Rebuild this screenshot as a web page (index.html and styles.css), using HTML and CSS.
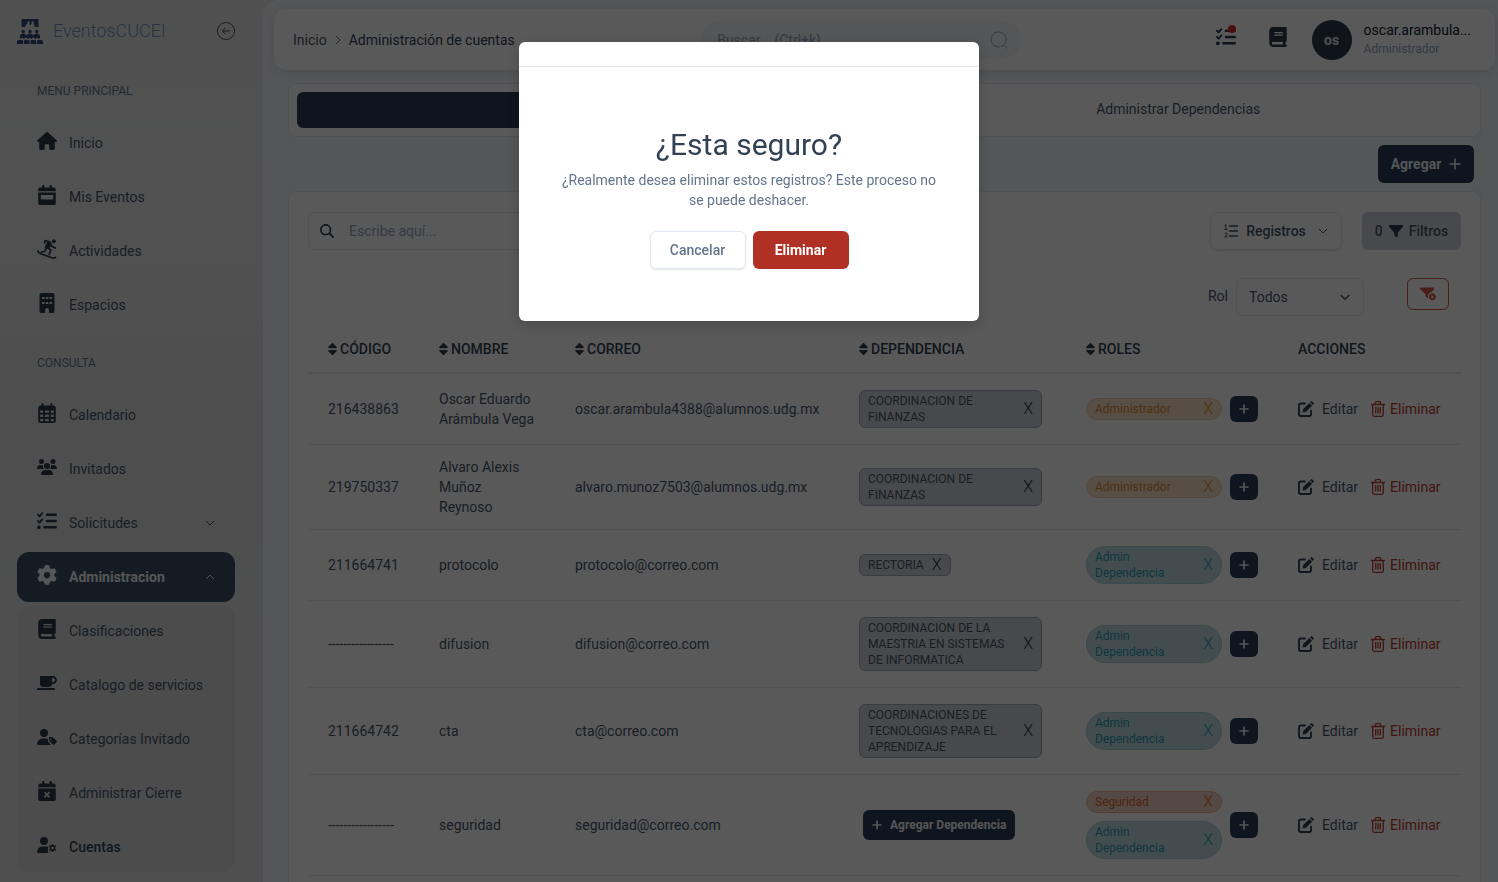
FILE: index.html
```html
<!DOCTYPE html>
<html lang="es">

<head>
  <meta charset="UTF-8">
  <meta name="viewport" content="width=device-width, initial-scale=1.0">
  <title>EventosCUCEI - Administración de cuentas</title>
  <link rel="stylesheet" href="styles.css">
</head>

<body>
  <svg class="sprite" aria-hidden="true">
    <symbol id="i-logo" viewBox="0 0 26 25">
      <path fill-rule="evenodd" d="M5.500 0h15q1 0 1 1v7h-3.700q0-2.500-1.300-3.300a1.300 1.300 0 1 0-1.700 0q-1 .6-1.300 1.800-.3-1.200-1.300-1.800a1.300 1.300 0 1 0-1.700 0Q8.200 5.500 8.200 8H4.500V1q0-1 1-1z" />
      <circle cx="6.200" cy="12.500" r="1.700" />
      <circle cx="13" cy="12.500" r="1.700" />
      <circle cx="19.800" cy="12.500" r="1.700" />
      <path d="M2.800 19q.2-4.400 3.400-4.400 2.300 0 3.400 2 1.100-2 3.400-2t3.400 2q1.100-2 3.400-2 3.200 0 3.400 4.400l-1.600.800-1.600-1-1.800 1.200-1.800-1.700-2 1.700-1.700-1.200-1.700 1.200-2-1.700-1.800 1.700-1.800-1.200-1.600 1z" />
      <path d="M1.500 21h3.800q.9 0 .9 1v3H0v-2.500q0-1.500 1.500-1.500zM8 21h3.500q1 0 1 1v3H7v-3q0-1 1-1zM14.500 21H18q1 0 1 1v3h-5.500v-3q0-1 1-1zM20.700 21h3.800q1.500 0 1.500 1.500V25h-6.200v-3q0-1 .9-1z" />
    </symbol>
    <symbol id="i-house" viewBox="0 0 576 512">
      <path d="M575.8 255.500c0 18-15 32.100-32 32.100h-32l.7 160.200c0 2.700-.2 5.400-.5 8.100V472c0 22.100-17.900 40-40 40H392c-22.100 0-40-17.900-40-40V384c0-17.700-14.300-32-32-32H256c-17.700 0-32 14.300-32 32v88c0 22.100-17.900 40-40 40H104c-22.100 0-40-17.900-40-40V287.600H32c-18 0-32-14-32-32.100c0-9 3-17 10-24L266.400 8c7-7 15-8 22-8s15 2 21 7L564.800 231.500c8 7 12 15 11 24z" />
    </symbol>
    <symbol id="i-event" viewBox="0 0 448 512">
      <path d="M96 32a32 32 0 0 1 64 0v32h128V32a32 32 0 0 1 64 0v32h48a48 48 0 0 1 48 48v48H0v-48a48 48 0 0 1 48-48h48z" />
      <path fill-rule="evenodd" d="M0 192h448v272a48 48 0 0 1-48 48H48a48 48 0 0 1-48-48zm80 64a16 16 0 0 0-16 16v80a16 16 0 0 0 16 16h288a16 16 0 0 0 16-16v-80a16 16 0 0 0-16-16z" />
    </symbol>
    <symbol id="i-snow" viewBox="0 0 20 20">
      <circle cx="16.800" cy="2.200" r="2" />
      <path d="M8 1.500l4.500 1.300L14.200 7l4.300 2M8 1.500 7.500 4M10 8.500l3.800 2.500-1.600 4.500M9 9.500 8.300 12l-4 1.300M.8 12q.7 1.700 2.400 2.500l11.500 4.200q2.200.8 3.800-.2" fill="none" stroke="currentColor" stroke-width="1.700" stroke-linecap="round" stroke-linejoin="round" />
      <path d="m10.500 2 3.500 1.500 1.200 2L11.500 10l-3.500-.5q-.5-1.700.5-3z" />
    </symbol>
    <symbol id="i-building" viewBox="0 0 384 512">
      <path fill-rule="evenodd" d="M48 0h288a48 48 0 0 1 48 48v416a48 48 0 0 1-48 48h-96v-80a48 48 0 0 0-96 0v80H48a48 48 0 0 1-48-48V48A48 48 0 0 1 48 0zm16 104v48h64v-48zm96 0v48h64v-48zm96 0v48h64v-48zM64 232v48h64v-48zm96 0v48h64v-48zm96 0v48h64v-48z" />
    </symbol>
    <symbol id="i-calendar" viewBox="0 0 448 512">
      <path fill-rule="evenodd" d="M88 24a24 24 0 0 1 48 0v40h176V24a24 24 0 0 1 48 0v40h24a64 64 0 0 1 64 64v320a64 64 0 0 1-64 64H64a64 64 0 0 1-64-64V128a64 64 0 0 1 64-64h24zM48 192v56h80v-56zm128 0v56h96v-56zm144 0v56h80v-56zM48 296v64h80v-64zm128 0v64h96v-64zm144 0v64h80v-64zM48 408v40q0 16 16 16h64v-56zm128 0v56h96v-56zm144 0v56h64q16 0 16-16v-40z" />
    </symbol>
    <symbol id="i-users" viewBox="0 0 640 512">
      <path d="M144 0a80 80 0 1 1 0 160 80 80 0 1 1 0-160zM512 0a80 80 0 1 1 0 160 80 80 0 1 1 0-160zM0 298.700C0 239.800 47.800 192 106.700 192h42.700c15.900 0 31 3.500 44.600 9.700-1.300 7.200-1.900 14.700-1.900 22.300 0 38.200 16.800 72.500 43.300 96H21.300C9.600 320 0 310.400 0 298.700zM405.300 320c26.600-23.500 43.300-57.800 43.300-96 0-7.600-.7-15-1.900-22.300 13.600-6.300 28.700-9.700 44.600-9.700h42.700C592.200 192 640 239.800 640 298.700c0 11.800-9.600 21.300-21.300 21.300H405.300zM224 224a96 96 0 1 1 192 0 96 96 0 1 1-192 0zM128 485.300C128 411.700 187.700 352 261.300 352h117.400C452.300 352 512 411.700 512 485.300c0 14.700-11.900 26.700-26.700 26.700H154.700c-14.700 0-26.700-11.900-26.700-26.700z" />
    </symbol>
    <symbol id="i-check" viewBox="0 0 512 512">
      <path d="M152.100 38.200c9.900 8.900 10.700 24 1.800 33.900l-72 80c-4.400 4.900-10.600 7.800-17.200 7.900s-12.900-2.400-17.600-7L7 113C-2.300 103.600-2.300 88.400 7 79s24.600-9.400 33.900 0l22.100 22.100 55.100-61.200c8.900-9.900 24-10.700 33.900-1.800zm0 160c9.900 8.900 10.700 24 1.800 33.900l-72 80c-4.400 4.900-10.600 7.800-17.200 7.900s-12.900-2.400-17.600-7L7 273c-9.400-9.400-9.400-24.600 0-33.900s24.600-9.400 33.900 0l22.100 22.100 55.100-61.200c8.900-9.900 24-10.700 33.900-1.800zM224 96c0-17.700 14.300-32 32-32H480c17.700 0 32 14.300 32 32s-14.300 32-32 32H256c-17.700 0-32-14.300-32-32zm0 160c0-17.700 14.300-32 32-32H480c17.700 0 32 14.300 32 32s-14.300 32-32 32H256c-17.700 0-32-14.300-32-32zM160 416c0-17.700 14.300-32 32-32H480c17.700 0 32 14.300 32 32s-14.300 32-32 32H192c-17.700 0-32-14.300-32-32zM48 368a48 48 0 1 1 0 96 48 48 0 1 1 0-96z" />
    </symbol>
    <symbol id="i-gear" viewBox="0 0 512 512">
      <path d="M495.900 166.600c3.200 8.700 .5 18.400-6.400 24.600l-43.300 39.400c1.100 8.300 1.700 16.800 1.700 25.400s-.6 17.100-1.700 25.400l43.300 39.400c6.900 6.200 9.600 15.900 6.400 24.600c-4.400 11.900-9.700 23.300-15.800 34.300l-4.700 8.100c-6.600 11-14 21.400-22.100 31.200c-5.900 7.200-15.700 9.600-24.500 6.800l-55.700-17.700c-13.400 10.300-28.200 18.900-44 25.400l-12.500 57.100c-2 9.100-9 16.300-18.200 17.800c-13.800 2.300-28 3.500-42.500 3.500s-28.700-1.200-42.500-3.500c-9.200-1.500-16.200-8.700-18.200-17.800l-12.500-57.100c-15.800-6.500-30.600-15.100-44-25.400L83.100 425.900c-8.800 2.800-18.600 .3-24.500-6.800c-8.100-9.800-15.500-20.200-22.100-31.200l-4.700-8.100c-6.100-11-11.400-22.400-15.800-34.300c-3.200-8.700-.5-18.400 6.400-24.600l43.300-39.400C64.600 273.100 64 264.600 64 256s.6-17.100 1.700-25.400L22.400 191.200c-6.900-6.200-9.600-15.900-6.400-24.600c4.400-11.900 9.700-23.300 15.800-34.300l4.700-8.100c6.600-11 14-21.400 22.100-31.200c5.900-7.200 15.700-9.600 24.500-6.800l55.700 17.700c13.400-10.300 28.200-18.900 44-25.400l12.500-57.100c2-9.100 9-16.300 18.200-17.800C227.300 1.200 241.500 0 256 0s28.700 1.200 42.500 3.500c9.200 1.500 16.200 8.700 18.200 17.800l12.500 57.100c15.800 6.500 30.600 15.100 44 25.400l55.700-17.700c8.800-2.800 18.600-.3 24.500 6.800c8.100 9.800 15.500 20.200 22.100 31.200l4.700 8.100c6.100 11 11.400 22.400 15.800 34.300zM256 336a80 80 0 1 0 0-160 80 80 0 1 0 0 160z" />
    </symbol>
    <symbol id="i-book" viewBox="0 0 448 512">
      <path d="M96 0C43 0 0 43 0 96V416c0 53 43 96 96 96H416c17.700 0 32-14.300 32-32s-14.300-32-32-32V384c17.700 0 32-14.300 32-32V32c0-17.700-14.300-32-32-32H96zm0 384H352v64H96c-17.700 0-32-14.300-32-32s14.300-32 32-32zm32-240c0-8.800 7.200-16 16-16H336c8.800 0 16 7.200 16 16s-7.200 16-16 16H144c-8.800 0-16-7.200-16-16zm16 48H336c8.800 0 16 7.200 16 16s-7.200 16-16 16H144c-8.800 0-16-7.200-16-16s7.200-16 16-16z" />
    </symbol>
    <symbol id="i-mug" viewBox="0 0 640 512">
      <path d="M96 64c0-17.700 14.300-32 32-32H512c70.700 0 128 57.300 128 128s-57.300 128-128 128H480c0 53-43 96-96 96H192c-53 0-96-43-96-96V64zM480 224h32c35.300 0 64-28.700 64-64s-28.700-64-64-64H480V224zM32 416H544c17.700 0 32 14.300 32 32s-14.300 32-32 32H32c-17.700 0-32-14.300-32-32s14.300-32 32-32z" />
    </symbol>
    <symbol id="i-usertag" viewBox="0 0 640 512">
      <path d="M224 256a128 128 0 1 0 0-256 128 128 0 1 0 0 256zm-45.700 48C79.800 304 0 383.800 0 482.300 0 498.700 13.300 512 29.700 512h388.600c10 0 18.900-4.900 24.300-12.500l-63.400-63.400c-18-18-28.100-42.400-28.100-67.900V320c-23-10.300-48-16-81.400-16z" />
      <path fill-rule="evenodd" d="M384 256h100q20 0 33 13l109 109q20 22 0 45l-72 74q-24 20-46 0L399 388q-15-14-15-34zm52 44a24 24 0 1 0 1 0z" />
    </symbol>
    <symbol id="i-calx" viewBox="0 0 448 512">
      <path d="M96 32a32 32 0 0 1 64 0v32h128V32a32 32 0 0 1 64 0v32h48a48 48 0 0 1 48 48v48H0v-48a48 48 0 0 1 48-48h48z" />
      <path fill-rule="evenodd" d="M0 192h448v272a48 48 0 0 1-48 48H48a48 48 0 0 1-48-48zm175 79-32 32 49 49-49 49 32 32 49-49 49 49 32-32-49-49 49-49-32-32-49 49z" />
    </symbol>
    <symbol id="i-usergear" viewBox="0 0 640 512">
      <path d="M224 256a128 128 0 1 0 0-256 128 128 0 1 0 0 256zm-45.700 48C79.800 304 0 383.800 0 482.300 0 498.700 13.300 512 29.700 512h350q-22-20-34-52-10-34 12-57-18-30 10-94l-98-5z" />
      <path fill-rule="evenodd" d="m474 222 45 0 7 38 25 14 36-13 23 40-29 26v50l29 26-23 40-36-13-25 14-7 38h-45l-7-38-25-14-36 13-23-40 29-26v-50l-29-26 23-40 36 13 25-14zm23 88a42 42 0 1 0 1 0z" />
    </symbol>
    <symbol id="i-filter" viewBox="0 0 512 512">
      <path d="M3.900 54.900C10.500 40.900 24.500 32 40 32H472c15.500 0 29.500 8.900 36.100 22.900s4.600 30.500-5.200 42.500L320 320.900V448c0 12.100-6.800 23.200-17.700 28.600s-23.800 4.300-33.500-3l-64-48c-8.100-6-12.800-15.500-12.800-25.600V320.900L9 97.300C-.7 85.400-2.800 68.800 3.900 54.900z" />
    </symbol>
    <symbol id="i-filterx" viewBox="0 0 640 512">
      <path d="M4 23Q12 0 40 0H532q28 0 36 23t-9 42L462 184q-130 10-142 160v80l-84-56q-16-10-16-32V270L13 65Q-4 46 4 23z" />
      <path fill-rule="evenodd" d="M496 224a144 144 0 1 0 1 0zm-59 108 23-23 36 36 36-36 23 23-36 36 36 36-23 23-36-36-36 36-23-23 36-36z" />
    </symbol>
    <symbol id="i-search" viewBox="0 0 512 512">
      <path d="M416 208c0 45.900-14.900 88.300-40 122.700L502.600 457.400c12.500 12.500 12.500 32.800 0 45.300s-32.800 12.500-45.300 0L330.700 376c-34.400 25.200-76.800 40-122.700 40C93.100 416 0 322.900 0 208S93.100 0 208 0S416 93.100 416 208zM208 352a144 144 0 1 0 0-288 144 144 0 1 0 0 288z" />
    </symbol>
    <symbol id="i-sort" viewBox="0 0 320 512">
      <path d="M137.400 41.400c12.500-12.500 32.800-12.500 45.300 0l128 128c9.200 9.200 11.900 22.900 6.900 34.900s-16.600 19.800-29.600 19.800H32c-12.900 0-24.600-7.800-29.600-19.800s-2.200-25.700 6.900-34.900l128-128zm0 429.300l-128-128c-9.200-9.200-11.900-22.900-6.900-34.900s16.600-19.800 29.600-19.800H288c12.900 0 24.600 7.800 29.600 19.800s2.200 25.700-6.900 34.900l-128 128c-12.500 12.500-32.800 12.500-45.300 0z" />
    </symbol>
    <symbol id="i-lens" viewBox="0 0 18 18">
      <path d="M8.500 1a7.500 7.500 0 1 0 .1 0zM14 14l3.500 3.500" fill="none" stroke="currentColor" />
    </symbol>
    <symbol id="i-back" viewBox="0 0 18 18">
      <path d="M9 .5a8.500 8.500 0 1 0 .1 0zM13 9H5.500M8.500 5.800 5.300 9l3.200 3.200" fill="none" stroke="currentColor" />
    </symbol>
    <symbol id="i-down" viewBox="0 0 10 10">
      <path d="M1 3l4 4 4-4" fill="none" stroke="currentColor" />
    </symbol>
    <symbol id="i-caret" viewBox="0 0 10 10">
      <path d="M.7 3 5 7.300 9.300 3" fill="none" stroke="currentColor" stroke-width="1.500" />
    </symbol>
    <symbol id="i-up" viewBox="0 0 10 10">
      <path d="M1 7l4-4 4 4" fill="none" stroke="currentColor" />
    </symbol>
    <symbol id="i-next" viewBox="0 0 10 10">
      <path d="M3 1l4 4-4 4" fill="none" stroke="currentColor" />
    </symbol>
    <symbol id="i-plus" viewBox="0 0 12 12">
      <path d="M6 .5v11M.5 6h11" fill="none" stroke="currentColor" stroke-width="1.500" />
    </symbol>
    <symbol id="i-plus-bold" viewBox="0 0 10 10">
      <path d="M5 .5v9M.5 5h9" fill="none" stroke="currentColor" stroke-width="1.700" />
    </symbol>
    <symbol id="i-list" viewBox="0 0 14 14">
      <path d="M5 2h9M5 7h9M5 12h9" fill="none" stroke="currentColor" stroke-width="1.500" />
      <path d="M.5 1.500 2 .8v4.700M.5 5.500h3M.6 9.300q1.200-1 2.200-.2.800 1-.4 2L.7 13h3" fill="none" stroke="currentColor" />
    </symbol>
    <symbol id="i-edit" viewBox="0 0 16 16">
      <path d="M7 2.500H2.800Q1 2.500 1 4.300v9Q1 15 2.800 15h8.400q1.800 0 1.800-1.700V9.500" fill="none" stroke="currentColor" stroke-width="1.900" stroke-linecap="round" />
      <path d="M11.300 1.900 14.100 4.700 7.900 10.900 4.500 11.600 5.200 8.100zM12 1.200l.9-.8q.7-.6 1.400 0l1.300 1.300q.5.700 0 1.300l-.9.900z" />
    </symbol>
    <symbol id="i-trash" viewBox="0 0 14 16">
      <path d="M0 3.500h14M4.500 3V1.500Q4.500.7 5.300.7h3.400q.8 0 .8.800V3M1.700 4v9.800q0 1.500 1.500 1.500h7.600q1.500 0 1.500-1.500V4M4.700 6v6.500M7 6v6.500M9.300 6v6.500" fill="none" stroke="currentColor" stroke-width="1.300" />
    </symbol>
  </svg>

  <div class="layout">
    <aside class="sidebar">
      <div class="brand">
        <svg class="brand-logo"><use href="#i-logo" /></svg>
        <a href="#" class="brand-name">EventosCUCEI</a>
        <button class="icon-btn" aria-label="Contraer menú"><svg class="icon-18"><use href="#i-back" /></svg></button>
      </div>

      <nav>
        <h2 class="menu-title">MENU PRINCIPAL</h2>
        <ul class="menu">
          <li><a href="#" class="menu-link"><svg class="menu-icon"><use href="#i-house" /></svg>Inicio</a></li>
          <li><a href="#" class="menu-link"><svg class="menu-icon"><use href="#i-event" /></svg>Mis Eventos</a></li>
          <li><a href="#" class="menu-link"><svg class="menu-icon"><use href="#i-snow" /></svg>Actividades</a></li>
          <li><a href="#" class="menu-link"><svg class="menu-icon"><use href="#i-building" /></svg>Espacios</a></li>
        </ul>
        <h2 class="menu-title">CONSULTA</h2>
        <ul class="menu">
          <li><a href="#" class="menu-link"><svg class="menu-icon"><use href="#i-calendar" /></svg>Calendario</a></li>
          <li><a href="#" class="menu-link"><svg class="menu-icon"><use href="#i-users" /></svg>Invitados</a></li>
          <li><a href="#" class="menu-link"><svg class="menu-icon"><use href="#i-check" /></svg>Solicitudes<svg class="menu-arrow"><use href="#i-down" /></svg></a></li>
          <li><a href="#" class="menu-link active"><svg class="menu-icon"><use href="#i-gear" /></svg>Administracion<svg class="menu-arrow"><use href="#i-up" /></svg></a>
            <ul class="menu submenu">
              <li><a href="#" class="menu-link"><svg class="menu-icon"><use href="#i-book" /></svg>Clasificaciones</a></li>
              <li><a href="#" class="menu-link"><svg class="menu-icon"><use href="#i-mug" /></svg>Catalogo de servicios</a></li>
              <li><a href="#" class="menu-link"><svg class="menu-icon"><use href="#i-usertag" /></svg>Categorías Invitado</a></li>
              <li><a href="#" class="menu-link"><svg class="menu-icon"><use href="#i-calx" /></svg>Administrar Cierre</a></li>
              <li><a href="#" class="menu-link current"><svg class="menu-icon"><use href="#i-usergear" /></svg>Cuentas</a></li>
            </ul>
          </li>
        </ul>
      </nav>
    </aside>

    <div class="main">
      <header class="topbar">
        <nav class="breadcrumb" aria-label="Ruta">
          <a href="#">Inicio</a>
          <svg class="icon-10"><use href="#i-next" /></svg>
          <span>Administración de cuentas</span>
        </nav>
        <div class="quick-search">
          <input type="text" placeholder="Buscar &nbsp;&nbsp; (Ctrl+k)" aria-label="Buscar">
          <svg class="icon-18"><use href="#i-lens" /></svg>
        </div>
        <div class="user-area">
          <button class="icon-btn notify" aria-label="Solicitudes pendientes"><svg class="icon-20"><use href="#i-check" /></svg></button>
          <button class="icon-btn" aria-label="Manual"><svg class="icon-20"><use href="#i-book" /></svg></button>
          <div class="user">
            <span class="avatar">os</span>
            <div>
              <div class="user-name">oscar.arambula...</div>
              <div class="user-role">Administrador</div>
            </div>
          </div>
        </div>
      </header>

      <main class="content">
        <div class="tabs">
          <button class="tab active" aria-label="Administrar Cuentas"></button>
          <button class="tab">Administrar Dependencias</button>
        </div>

        <div class="add-row">
          <button class="btn btn-primary btn-add">Agregar <svg class="icon-12"><use href="#i-plus" /></svg></button>
        </div>

        <section class="card">
          <div class="toolbar">
            <div class="search-box">
              <svg class="icon-14"><use href="#i-search" /></svg>
              <input type="text" placeholder="Escribe aquí..." aria-label="Buscar cuentas">
            </div>
            <button class="btn btn-registros"><svg class="icon-14"><use href="#i-list" /></svg>Registros<svg class="icon-10"><use href="#i-down" /></svg></button>
            <button class="btn btn-filtros">0<svg class="icon-14"><use href="#i-filter" /></svg>Filtros</button>
          </div>
          <div class="filters">
            <label for="rol">Rol</label>
            <div class="select-wrap">
              <select id="rol">
                <option>Todos</option>
              </select>
              <svg class="icon-10"><use href="#i-caret" /></svg>
            </div>
            <button class="btn-clear" aria-label="Quitar filtros"><svg class="icon-16"><use href="#i-filterx" /></svg></button>
          </div>

          <table class="accounts">
            <colgroup>
              <col class="col-code">
              <col class="col-name">
              <col>
              <col class="col-dep">
              <col class="col-roles">
              <col class="col-actions">
            </colgroup>
            <thead>
              <tr>
                <th><svg class="sort"><use href="#i-sort" /></svg>CÓDIGO</th>
                <th><svg class="sort"><use href="#i-sort" /></svg>NOMBRE</th>
                <th><svg class="sort"><use href="#i-sort" /></svg>CORREO</th>
                <th><svg class="sort"><use href="#i-sort" /></svg>DEPENDENCIA</th>
                <th><svg class="sort"><use href="#i-sort" /></svg>ROLES</th>
                <th>ACCIONES</th>
              </tr>
            </thead>
            <tbody>
              <tr>
                <td>216438863</td>
                <td>Oscar Eduardo Arámbula Vega</td>
                <td>oscar.arambula4388@alumnos.udg.mx</td>
                <td><div class="chip dep">COORDINACION DE FINANZAS <button>X</button></div></td>
                <td>
                  <div class="roles">
                    <div class="role-list">
                      <div class="chip role admin">Administrador <button>X</button></div>
                    </div>
                    <button class="btn-plus" aria-label="Agregar rol"><svg class="icon-10"><use href="#i-plus-bold" /></svg></button>
                  </div>
                </td>
                <td>
                  <div class="actions">
                    <a href="#"><svg class="icon-16"><use href="#i-edit" /></svg>Editar</a>
                    <a href="#" class="danger"><svg class="icon-16"><use href="#i-trash" /></svg>Eliminar</a>
                  </div>
                </td>
              </tr>
              <tr>
                <td>219750337</td>
                <td>Alvaro Alexis Muñoz Reynoso</td>
                <td>alvaro.munoz7503@alumnos.udg.mx</td>
                <td><div class="chip dep">COORDINACION DE FINANZAS <button>X</button></div></td>
                <td>
                  <div class="roles">
                    <div class="role-list">
                      <div class="chip role admin">Administrador <button>X</button></div>
                    </div>
                    <button class="btn-plus" aria-label="Agregar rol"><svg class="icon-10"><use href="#i-plus-bold" /></svg></button>
                  </div>
                </td>
                <td>
                  <div class="actions">
                    <a href="#"><svg class="icon-16"><use href="#i-edit" /></svg>Editar</a>
                    <a href="#" class="danger"><svg class="icon-16"><use href="#i-trash" /></svg>Eliminar</a>
                  </div>
                </td>
              </tr>
              <tr>
                <td>211664741</td>
                <td>protocolo</td>
                <td>protocolo@correo.com</td>
                <td><div class="chip dep">RECTORIA <button>X</button></div></td>
                <td>
                  <div class="roles">
                    <div class="role-list">
                      <div class="chip role dependency">Admin Dependencia <button>X</button></div>
                    </div>
                    <button class="btn-plus" aria-label="Agregar rol"><svg class="icon-10"><use href="#i-plus-bold" /></svg></button>
                  </div>
                </td>
                <td>
                  <div class="actions">
                    <a href="#"><svg class="icon-16"><use href="#i-edit" /></svg>Editar</a>
                    <a href="#" class="danger"><svg class="icon-16"><use href="#i-trash" /></svg>Eliminar</a>
                  </div>
                </td>
              </tr>
              <tr>
                <td>-----------------</td>
                <td>difusion</td>
                <td>difusion@correo.com</td>
                <td><div class="chip dep">COORDINACION DE LA MAESTRIA EN SISTEMAS DE INFORMATICA <button>X</button></div></td>
                <td>
                  <div class="roles">
                    <div class="role-list">
                      <div class="chip role dependency">Admin Dependencia <button>X</button></div>
                    </div>
                    <button class="btn-plus" aria-label="Agregar rol"><svg class="icon-10"><use href="#i-plus-bold" /></svg></button>
                  </div>
                </td>
                <td>
                  <div class="actions">
                    <a href="#"><svg class="icon-16"><use href="#i-edit" /></svg>Editar</a>
                    <a href="#" class="danger"><svg class="icon-16"><use href="#i-trash" /></svg>Eliminar</a>
                  </div>
                </td>
              </tr>
              <tr>
                <td>211664742</td>
                <td>cta</td>
                <td>cta@correo.com</td>
                <td><div class="chip dep">COORDINACIONES DE TECNOLOGIAS PARA EL APRENDIZAJE <button>X</button></div></td>
                <td>
                  <div class="roles">
                    <div class="role-list">
                      <div class="chip role dependency">Admin Dependencia <button>X</button></div>
                    </div>
                    <button class="btn-plus" aria-label="Agregar rol"><svg class="icon-10"><use href="#i-plus-bold" /></svg></button>
                  </div>
                </td>
                <td>
                  <div class="actions">
                    <a href="#"><svg class="icon-16"><use href="#i-edit" /></svg>Editar</a>
                    <a href="#" class="danger"><svg class="icon-16"><use href="#i-trash" /></svg>Eliminar</a>
                  </div>
                </td>
              </tr>
              <tr>
                <td>-----------------</td>
                <td>seguridad</td>
                <td>seguridad@correo.com</td>
                <td><button class="btn btn-primary btn-dep"><svg class="icon-10"><use href="#i-plus-bold" /></svg>Agregar Dependencia</button></td>
                <td>
                  <div class="roles">
                    <div class="role-list">
                      <div class="chip role security">Seguridad <button>X</button></div>
                      <div class="chip role dependency">Admin Dependencia <button>X</button></div>
                    </div>
                    <button class="btn-plus" aria-label="Agregar rol"><svg class="icon-10"><use href="#i-plus-bold" /></svg></button>
                  </div>
                </td>
                <td>
                  <div class="actions">
                    <a href="#"><svg class="icon-16"><use href="#i-edit" /></svg>Editar</a>
                    <a href="#" class="danger"><svg class="icon-16"><use href="#i-trash" /></svg>Eliminar</a>
                  </div>
                </td>
              </tr>
            </tbody>
          </table>
        </section>
      </main>
    </div>
  </div>

  <div class="overlay">
    <div class="modal" role="dialog" aria-modal="true" aria-labelledby="modal-title">
      <div class="modal-header"></div>
      <div class="modal-body">
        <h1 id="modal-title">¿Esta seguro?</h1>
        <p>¿Realmente desea eliminar estos registros? Este proceso no se puede deshacer.</p>
        <div class="modal-buttons">
          <button class="btn btn-cancel">Cancelar</button>
          <button class="btn btn-danger">Eliminar</button>
        </div>
      </div>
    </div>
  </div>
</body>

</html>
```
FILE: styles.css
```css
* {
  box-sizing: border-box;
}

body {
  margin: 0;
  height: 100vh;
  overflow: hidden;
  font-family: Roboto, sans-serif;
  font-size: 14px;
  line-height: 20px;
  color: #475569;
  background: #f1f5f9;
}

button,
input,
select {
  font: inherit;
  color: inherit;
}

button {
  padding: 0;
  border: none;
  background: none;
  cursor: pointer;
}

a {
  color: inherit;
  text-decoration: none;
}

ul {
  list-style: none;
  margin: 0;
  padding: 0;
}

svg {
  fill: currentColor;
  flex-shrink: 0;
}

.sprite {
  display: none;
}

.icon-10 { width: 10px; height: 10px; }
.icon-12 { width: 12px; height: 12px; }
.icon-14 { width: 14px; height: 14px; }
.icon-16 { width: 16px; height: 16px; }
.icon-18 { width: 18px; height: 18px; }
.icon-20 { width: 20px; height: 20px; }

.layout {
  display: flex;
  min-height: 100vh;
  background: #e7e9ea;
}

/* Sidebar */
.sidebar {
  width: 263px;
  flex-shrink: 0;
  padding: 0 28px 0 17px;
  background: linear-gradient(180deg, #e4e5e5 0%, #e8e8e9 25%, #dedede 50%, #e2e3e3 75%, #e4e3e2 100%);
}

.brand {
  display: flex;
  align-items: center;
  height: 58px;
  padding-top: 4px;
  gap: 10px;
}

.brand-logo {
  width: 26px;
  height: 25px;
  color: #314a7c;
}

.brand-name {
  flex: 1;
  font-size: 18px;
  font-weight: 300;
  color: #7390b8;
}

.icon-btn {
  display: flex;
  color: #475569;
}

.menu-title {
  margin: 0;
  padding: 23px 20px 17px;
  font-size: 12px;
  font-weight: 400;
  line-height: 20px;
  color: #64748b;
}

.menu {
  display: flex;
  flex-direction: column;
  gap: 4px;
}

.menu-link {
  display: flex;
  align-items: center;
  gap: 12px;
  height: 50px;
  padding: 0 20px;
  border-radius: 12px;
}

.menu-icon {
  width: 20px;
  height: 20px;
  margin-bottom: 4px;
  color: #2b3a4c;
}

.menu-arrow {
  width: 10px;
  height: 10px;
  margin-left: auto;
}

.menu-link.active {
  font-weight: 700;
  color: #f1f5f9;
  background: #3a4f63;
}

.active .menu-icon {
  color: #f1f5f9;
}

.menu-link.current {
  font-weight: 500;
  color: #334155;
}

.submenu {
  margin-top: 4px;
  border-radius: 12px;
  background: #d9d9d9;
}

/* Topbar */
.main {
  flex: 1;
  min-width: 0;
  padding: 9px 3px 0 11px;
  border-radius: 16px 0 0 0;
  background: #f1f5f9;
}

.topbar {
  display: flex;
  align-items: center;
  justify-content: space-between;
  height: 61px;
  padding: 0 24px 0 19px;
  border-radius: 12px;
  background: #fff;
  box-shadow: 0 2px 10px rgba(100, 116, 139, 0.2);
}

.breadcrumb {
  display: flex;
  align-items: center;
  gap: 6px;
}

.breadcrumb span {
  color: #334155;
}

.quick-search {
  display: flex;
  align-items: center;
  width: 320px;
  height: 38px;
  padding: 0 13px 0 16px;
  border-radius: 19px;
  color: #94a3b8;
  background: #f1f5f9;
}

.quick-search input,
.search-box input {
  flex: 1;
  min-width: 0;
  padding: 0;
  border: none;
  outline: none;
  background: none;
}

input::placeholder {
  color: #94a3b8;
  opacity: 1;
}

.user-area {
  display: flex;
  align-items: center;
  gap: 16px;
}

.user-area .icon-btn {
  padding: 6px 8px 12px;
  color: #2b3a4c;
}

.notify {
  position: relative;
}

.notify::after {
  content: "";
  position: absolute;
  top: 4px;
  right: 8px;
  width: 8px;
  height: 8px;
  border-radius: 50%;
  background: #dc2626;
}

.user {
  display: flex;
  align-items: center;
  gap: 12px;
}

.avatar {
  display: flex;
  align-items: center;
  justify-content: center;
  width: 40px;
  height: 40px;
  border-radius: 50%;
  font-weight: 700;
  color: #e2e8f0;
  background: #2b3a4c;
}

.user-name {
  line-height: 19px;
  color: #0f172a;
}

.user-role {
  font-size: 12px;
  line-height: 19px;
  color: #94a3b8;
}

/* Content */
.content {
  padding: 13px 14px 0 14px;
}

.tabs {
  display: flex;
  padding: 8px;
  border: 1px solid #e2e8f0;
  border-radius: 8px;
  background: #fff;
}

.tab {
  flex: 1;
  height: 36px;
  padding-bottom: 2px;
  border-radius: 6px;
}

.tab.active {
  background: #283c59;
}

.add-row {
  display: flex;
  justify-content: flex-end;
  padding: 8px 7px;
}

.btn {
  display: flex;
  align-items: center;
  justify-content: center;
  height: 38px;
  padding-bottom: 1px;
  border-radius: 6px;
  font-weight: 500;
}

.btn-primary {
  font-weight: 700;
  color: #f1f5f9;
  background: #283c59;
}

.btn-add {
  gap: 8px;
  width: 96px;
}

.card {
  padding: 20px 19px;
  border: 1px solid #e2e8f0;
  border-radius: 8px;
  background: #fff;
}

.toolbar {
  display: flex;
  gap: 20px;
}

.search-box {
  display: flex;
  align-items: center;
  gap: 15px;
  width: 340px;
  height: 38px;
  margin-right: auto;
  padding: 0 11px;
  border: 1px solid #e2e8f0;
  border-radius: 6px;
}

.search-box svg {
  color: #334155;
}

.btn-registros {
  gap: 8px;
  width: 132px;
  border: 1px solid #e2e8f0;
  border-radius: 8px;
  box-shadow: 0 1px 2px rgba(100, 116, 139, 0.2);
}

.btn-registros .icon-10 {
  margin-left: 4px;
}

.btn-filtros {
  gap: 6px;
  width: 99px;
  background: #cdd2da;
}

.btn-filtros svg {
  color: #283c59;
}

.filters {
  display: flex;
  justify-content: flex-end;
  padding: 28px 12px 12px 0;
}

.filters label {
  padding: 8px 8px 0 0;
}

.select-wrap {
  position: relative;
  margin-right: 43px;
}

.select-wrap select {
  appearance: none;
  width: 128px;
  height: 38px;
  padding: 0 12px 1px;
  border: 1px solid #e2e8f0;
  border-radius: 6px;
  background: #fff;
}

.select-wrap svg {
  position: absolute;
  top: 14px;
  right: 14px;
  pointer-events: none;
}

.btn-clear {
  display: flex;
  align-items: center;
  justify-content: center;
  width: 42px;
  height: 32px;
  border: 1px solid #cc5349;
  border-radius: 6px;
  color: #cc5349;
}

/* Table */
.accounts {
  width: 100%;
  table-layout: fixed;
  border-collapse: separate;
  border-spacing: 0;
}

.col-code { width: 111px; }
.col-name { width: 136px; }
.col-dep { width: 227px; }
.col-roles { width: 212px; }
.col-actions { width: 183px; }

.accounts th {
  padding: 11px 20px 13px;
  border-bottom: 2px solid #e2e8f0;
  font-weight: 500;
  text-align: left;
  color: #334155;
}

.accounts td {
  padding: 12px 20px;
  border-bottom: 1px solid #e2e8f0;
  vertical-align: middle;
}

.accounts td:nth-child(n + 4) {
  padding-right: 0;
}

.sort {
  width: 9px;
  height: 14px;
  margin-right: 3px;
  vertical-align: -2px;
}

.chip {
  display: flex;
  align-items: center;
  justify-content: space-between;
  gap: 8px;
  padding: 2px 8px;
  border: 1px solid;
  font-size: 12px;
  line-height: 16px;
}

.chip button {
  font-size: 16px;
  font-weight: 300;
  line-height: 16px;
}

.dep {
  width: fit-content;
  max-width: 183px;
  margin: 4px 0;
  border-color: #a0a9b6;
  border-radius: 6px;
  background: #cdd2da;
}

.dep button {
  color: #1e293b;
}

.roles {
  display: flex;
  align-items: center;
  gap: 8px;
}

.role-list {
  width: 136px;
}

.role {
  margin: 8px 0;
  border-radius: 19px;
}

.role-list .role:first-child {
  margin-top: 4px;
}

.role-list .role:last-child {
  margin-bottom: 4px;
}

.admin {
  color: #dc8c2c;
  border-color: #f0cda4;
  background: #f8e0c8;
}

.dependency {
  color: #2a9bad;
  border-color: #9dd0d9;
  background: #c0dde3;
}

.security {
  color: #dd622a;
  border-color: #eab398;
  background: #f3d2c2;
}

.btn-plus {
  display: flex;
  align-items: center;
  justify-content: center;
  width: 28px;
  height: 26px;
  border-radius: 6px;
  color: #f1f5f9;
  background: #283c59;
}

.btn-dep {
  gap: 8px;
  height: 30px;
  margin-left: 4px;
  padding: 0 9px;
  font-size: 12px;
}

.actions {
  display: flex;
  gap: 12px;
}

.actions a {
  display: flex;
  align-items: center;
  gap: 8px;
}

.actions a svg {
  color: #334155;
}

.actions a.danger,
.actions a.danger svg {
  color: #b93a30;
}

.actions a.danger {
  gap: 4px;
}

/* Modal */
.overlay {
  position: fixed;
  inset: 0;
  display: flex;
  align-items: flex-start;
  justify-content: center;
  padding-top: 42px;
  background: rgba(0, 0, 0, 0.65);
}

.modal {
  width: 460px;
  border-radius: 6px;
  background: #fff;
  box-shadow: 0 4px 16px rgba(0, 0, 0, 0.2);
}

.modal-header {
  height: 25px;
  border-bottom: 1px solid #e2e8f0;
}

.modal-body {
  padding: 60px 40px 52px;
  text-align: center;
}

.modal-body h1 {
  margin: 0;
  font-size: 30px;
  font-weight: 400;
  line-height: 36px;
  color: #334155;
}

.modal-body p {
  margin: 7px 0 21px;
  color: #64748b;
}

.modal-buttons {
  display: flex;
  justify-content: center;
  gap: 7px;
}

.modal-buttons .btn {
  width: 96px;
}

.btn-cancel {
  border: 1px solid #e2e8f0;
  color: #64748b;
  box-shadow: 0 1px 2px rgba(100, 116, 139, 0.2);
}

.btn-danger {
  font-weight: 700;
  color: #fff;
  background: #b13025;
}
```
